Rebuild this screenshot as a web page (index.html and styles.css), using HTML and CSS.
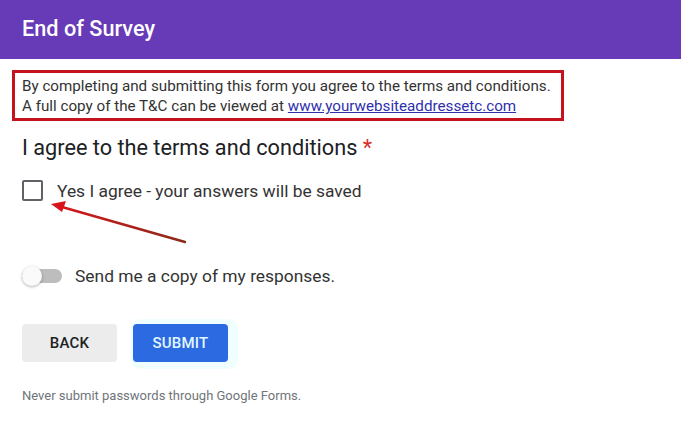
FILE: index.html
```html
<!DOCTYPE html>
<html lang="en">
<head>
    <meta charset="UTF-8">
    <meta name="viewport" content="width=device-width, initial-scale=1.0">
    <title>End of Survey</title>
    <link rel="stylesheet" href="styles.css">
</head>
<body>

    <!-- Section header -->
    <header class="section-head">
        <h1>End of Survey</h1>
    </header>

    <div class="form-body">
        <div class="terms-note">
            <p>By completing and submitting this form you agree to the terms and conditions.</p>
            <p>A full copy of the T&amp;C can be viewed at <a href="#">www.yourwebsiteaddressetc.com</a></p>
        </div>

        <div class="question">
            <h2>I agree to the terms and conditions <span class="required">*</span></h2>
            <label class="check-row">
                <span class="checkbox"></span>
                <span>Yes I agree - your answers will be saved</span>
            </label>
        </div>

        <div class="copy-row">
            <span class="toggle"><span class="thumb"></span></span>
            <span>Send me a copy of my responses.</span>
        </div>

        <div class="actions">
            <button class="btn-back">BACK</button>
            <button class="btn-submit">SUBMIT</button>
        </div>

        <p class="footnote">Never submit passwords through Google Forms.</p>
    </div>

    <!-- Annotation arrow pointing at the checkbox -->
    <svg class="arrow" width="681" height="426" viewBox="0 0 681 426">
        <defs>
            <linearGradient id="arrowFade" x1="0" y1="0" x2="1" y2="0">
                <stop offset="0" stop-color="#d4161c"/>
                <stop offset="1" stop-color="#8a2a1a"/>
            </linearGradient>
        </defs>
        <line x1="185" y1="242" x2="62" y2="207" stroke="url(#arrowFade)" stroke-width="2.5" stroke-linecap="round"/>
        <polygon points="51,204 66,201 62,212" fill="#d8141c"/>
    </svg>

</body>
</html>
```

FILE: styles.css
```css
body {
    margin: 0;
    padding: 0;
    background-color: #fff;
    font-family: 'Roboto', 'Liberation Sans', sans-serif;
    color: #202124;
    width: 681px;
    height: 426px;
    overflow: hidden;
    position: relative;
}

.section-head {
    background-color: #673ab7;
    height: 59px;
    display: flex;
    align-items: center;
    padding: 0 22px;
}

.section-head h1 {
    margin: 0;
    color: #fff;
    font-size: 21.7px;
    font-weight: 500;
    padding-bottom: 3px;
}

.form-body {
    padding: 11px 0 0 13px;
}

.terms-note {
    width: 552px;
    margin-left: -1px;
    box-sizing: border-box;
    border: 3px solid #c4121f;
    padding: 3px 7px 2px;
    font-size: 15.2px;
    line-height: 20px;
    color: #333;
    white-space: nowrap;
}

.terms-note p {
    margin: 0;
}

.terms-note a {
    color: #2f2fae;
    text-decoration: underline;
}

.question {
    padding-left: 9px;
}

.question h2 {
    margin: 14px 0 0;
    font-size: 21.7px;
    font-weight: 400;
    line-height: 26px;
    color: #202124;
}

.required {
    color: #d93025;
}

.check-row {
    display: flex;
    align-items: center;
    gap: 14px;
    margin-top: 19px;
    font-size: 17.4px;
    color: #333;
}

.checkbox {
    width: 17px;
    height: 17px;
    border: 2px solid #5f6368;
    border-radius: 2px;
}

.copy-row {
    display: flex;
    align-items: center;
    gap: 13px;
    height: 20px;
    margin-top: 65px;
    padding-left: 9px;
    font-size: 17.4px;
    color: #333;
}

.toggle {
    width: 40px;
    height: 14px;
    border-radius: 7px;
    background-color: #bdbdbd;
    position: relative;
}

.toggle .thumb {
    position: absolute;
    left: 0;
    top: -3px;
    width: 20px;
    height: 20px;
    border-radius: 50%;
    background-color: #fafafa;
    box-shadow: 0 1px 3px rgba(0, 0, 0, 0.3);
}

.actions {
    display: flex;
    gap: 16px;
    margin-top: 38px;
    padding-left: 9px;
}

.actions button {
    width: 95px;
    height: 38px;
    border: none;
    border-radius: 4px;
    font-family: 'Roboto', 'Liberation Sans', sans-serif;
    font-size: 15px;
    font-weight: 500;
    letter-spacing: 0.2px;
}

.btn-back {
    background-color: #ececec;
    color: #202124;
}

.btn-submit {
    background-color: #2c6ae2;
    color: #e2f8ff;
    box-shadow: 4px 1px 0 6px #effeff;
}

.footnote {
    margin: 26px 0 0;
    padding-left: 9px;
    font-size: 13px;
    line-height: 15px;
    color: #70757a;
}

.arrow {
    position: absolute;
    left: 0;
    top: 0;
    pointer-events: none;
}
```
